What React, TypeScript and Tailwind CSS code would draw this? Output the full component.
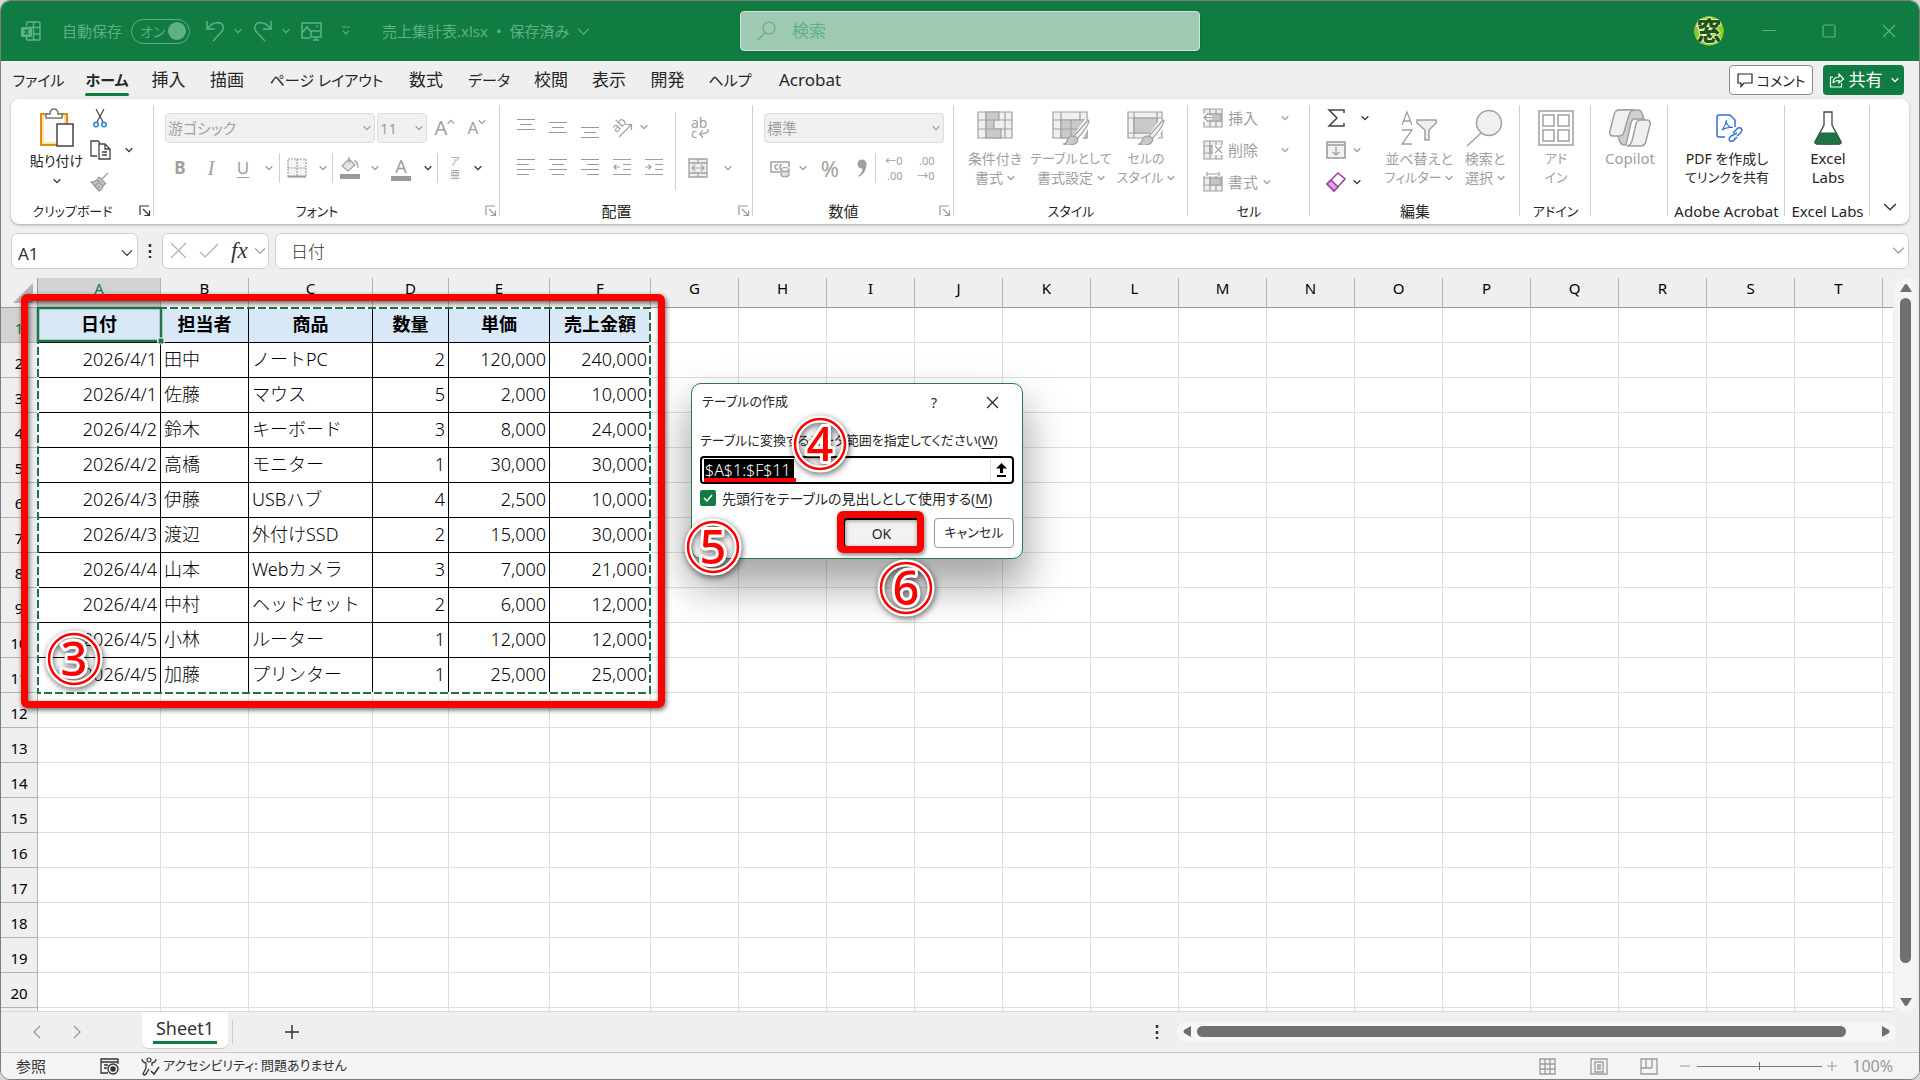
import type { ReactNode } from "react"
import clsx from "clsx"

const products: [string, string, string, string, string, string][] = [
  ["2026/4/1", "田中", "ノートPC", "2", "120,000", "240,000"],
  ["2026/4/1", "佐藤", "マウス", "5", "2,000", "10,000"],
  ["2026/4/2", "鈴木", "キーボード", "3", "8,000", "24,000"],
  ["2026/4/2", "高橋", "モニター", "1", "30,000", "30,000"],
  ["2026/4/3", "伊藤", "USBハブ", "4", "2,500", "10,000"],
  ["2026/4/3", "渡辺", "外付けSSD", "2", "15,000", "30,000"],
  ["2026/4/4", "山本", "Webカメラ", "3", "7,000", "21,000"],
  ["2026/4/4", "中村", "ヘッドセット", "2", "6,000", "12,000"],
  ["2026/4/5", "小林", "ルーター", "1", "12,000", "12,000"],
  ["2026/4/5", "加藤", "プリンター", "1", "25,000", "25,000"],
]
const headings = ["日付", "担当者", "商品", "数量", "単価", "売上金額"]
const sheet: string[][] = [headings, ...products]

const columns = "ABCDEFGHIJKLMNOPQRST".split("")
const columnWidths = ["w-[123px]", "w-[88px]", "w-[124px]", "w-[76px]", "w-[101px]", "w-[101px]"]

const menuTabs = [
  { label: "ファイル", width: "w-[71px]", kana: true },
  { label: "ホーム", width: "w-[66px]", kana: true },
  { label: "挿入", width: "w-[57px]" },
  { label: "描画", width: "w-[60px]" },
  { label: "ページ レイアウト", width: "w-[139px]", kana: true },
  { label: "数式", width: "w-[60px]" },
  { label: "データ", width: "w-[66px]", kana: true },
  { label: "校閲", width: "w-[58px]" },
  { label: "表示", width: "w-[58px]" },
  { label: "開発", width: "w-[59px]" },
  { label: "ヘルプ", width: "w-[66px]", kana: true },
  { label: "Acrobat", width: "w-[94px]" },
]

// Katakana labels are set smaller than kanji and Latin ones
function labelSize(text: string) {
  return /[ァ-ヶ]{2}/.test(text) ? "text-[13px]" : "text-[15px]"
}

function Chevron({ className = "text-[#9a9a9a]", size = 8 }: { className?: string; size?: number }) {
  return (
    <svg width={size} height={size} viewBox="0 0 8 8" fill="none" stroke="currentColor" strokeWidth={size > 10 ? 0.8 : 1.3} className={clsx("shrink-0", className)}>
      <path d="M.7 2.3 4 5.6 7.3 2.3" />
    </svg>
  )
}

function Icon({ w = 20, h = 20, children, className }: { w?: number; h?: number; children: ReactNode; className?: string }) {
  return (
    <svg width={w} height={h} viewBox={`0 0 ${w} ${h}`} fill="none" stroke="currentColor" strokeWidth="1.5" className={clsx("shrink-0", className)}>
      {children}
    </svg>
  )
}

// Ribbon button with a fixed-width cell
function Tool({ label, className, children }: { label: string; className: string; children: ReactNode }) {
  return (
    <button type="button" aria-label={label} className={clsx("flex shrink-0 items-center justify-center", className)}>
      {children}
    </button>
  )
}

function Divider() {
  return <span className="h-[30px] w-px shrink-0 bg-[#d0d0d0]" />
}

function Launcher({ dark = false }: { dark?: boolean }) {
  return (
    <Icon w={12} h={12} className={clsx("absolute right-[3px] bottom-[7px]", dark ? "text-[#333]" : "text-[#9a9a9a]")}>
      <path d="M1 10V1h9M4 4l6 6M10.500 5.500v5h-5" strokeWidth="1.200" />
    </Icon>
  )
}

function Group({ title, width, launcher, children }: { title: string; width: string; launcher?: "dark" | "light"; children: ReactNode }) {
  return (
    <section className={clsx("relative flex shrink-0 flex-col", width)}>
      <div className="flex h-[100px] items-start">{children}</div>
      <div className={clsx("flex h-6 justify-center leading-6 whitespace-nowrap text-[#262626]", labelSize(title), launcher && "pr-5")}>{title}</div>
      {launcher && <Launcher dark={launcher === "dark"} />}
      <span className="absolute top-1.5 right-0 bottom-2 w-px bg-[#d0d0d0]" />
    </section>
  )
}

function BigButton({ icon, lines, chevron, width, dark }: { icon: ReactNode; lines: string[]; chevron?: boolean; width: string; dark?: boolean }) {
  return (
    <button type="button" className={clsx("flex shrink-0 flex-col items-center pt-2", width, dark ? "text-[#262626]" : "text-[#a0a0a0]")}>
      <span className="flex h-[42px] items-center">{icon}</span>
      {lines.map((line, i) => (
        <span
          key={line}
          className={clsx(
            "flex h-[19px] items-center gap-1 leading-[19px] whitespace-nowrap",
            /^[A-Za-z]+$/.test(line) ? "text-[15px]" : /[ァ-ヶ]{2}/.test(line) ? "text-[13px]" : "text-[14px]"
          )}
        >
          {line}
          {chevron && i === lines.length - 1 && <Chevron />}
        </span>
      ))}
    </button>
  )
}

function AlignLines({ rows }: { rows: [number, number, number][] }) {
  return (
    <Icon w={20} h={26} className="text-[#999]">
      {rows.map(([x, w, y]) => (
        <path key={y} d={`M${x} ${y + 0.5}h${w}`} strokeWidth="1.200" />
      ))}
    </Icon>
  )
}

function TitleBar() {
  return (
    <header className="flex h-[60px] shrink-0 items-center bg-[#107c41] text-[#5db184]">
      <div className="flex w-[739px] shrink-0 items-center text-[15px]">
        <Icon className="ml-5">
          <path d="M5.500 5V2q0-1 1-1H18q1 0 1 1v16q0 1-1 1H6.500q-1 0-1-1v-2M12.500 1v18M5.500 6.500H19M12 13h7" />
          <rect x="0" y="6" width="11" height="10" rx="1.500" fill="currentColor" stroke="none" />
          <path d="m3.500 8.500 4 5m0-5-4 5" stroke="#107c41" />
        </Icon>
        <label htmlFor="autosave" className="ml-[21px] w-[69px] whitespace-nowrap">自動保存</label>
        <span className="relative flex h-[25px] w-[59px] items-center rounded-full border border-[#5db184] pl-2 text-[14px]">
          オン
          <input id="autosave" type="checkbox" defaultChecked className="absolute inset-0 appearance-none" />
          <span className="absolute right-[3px] size-[18px] rounded-full bg-[#5db184]" />
        </span>
        <Tool label="元に戻す" className="ml-3 w-[26px]">
          <Icon w={20} h={22}><path d="M2 1v8h8M2.500 8.500C6 4 10 2.500 13 2.500c7 1 6 7 3 10L8 21" strokeWidth="1.500" /></Icon>
        </Tool>
        <Tool label="元に戻すの履歴" className="w-5"><Chevron className="text-current" /></Tool>
        <Tool label="やり直し" className="w-[30px]">
          <Icon w={20} h={22}><path d="M18 1v8h-8M17.500 8.500C14 4 10 2.500 7 2.500c-7 1-6 7-3 10L12 21" strokeWidth="1.500" /></Icon>
        </Tool>
        <Tool label="やり直しの履歴" className="w-4"><Chevron className="text-current" /></Tool>
        <Tool label="画像" className="ml-1 w-[26px]">
          <Icon w={21}>
            <path d="M9 17H1V2h19v7M1 12l5-6 4 5M15 5h2" />
            <path d="M10 10h10v6H10zM15 16v3M12 19h6" />
          </Icon>
        </Tool>
        <Tool label="カスタマイズ" className="ml-3 w-5">
          <Icon w={10} h={10}><path d="M1 1h8M2 5l3 3 3-3" strokeWidth="1.200" /></Icon>
        </Tool>
        <button type="button" className="ml-[26px] flex items-center gap-2 whitespace-nowrap">
          <span>売上集計表.xlsx</span>
          <span>•</span>
          <span>保存済み</span>
          <Chevron className="text-current" size={13} />
        </button>
      </div>
      <div className="relative flex h-10 min-w-0 flex-1 items-center rounded border border-[#cfe5d9] bg-[#a0c9b4] pl-4 shadow">
        <Icon w={19} h={20}><circle cx="12" cy="7" r="6" strokeWidth="1.200" /><path d="M8 11.500 1 19" strokeWidth="1.200" /></Icon>
        <input aria-label="検索" placeholder="検索" className="ml-4 w-full bg-transparent text-[17px] outline-none placeholder:text-[#5db184]" />
      </div>
      <div className="flex w-[719px] shrink-0 items-center justify-end">
        <button type="button" aria-label="アカウント" className="mr-[15px] size-[30px] rounded-full">
          <svg width="30" height="30" viewBox="0 0 30 30" className="rounded-full">
            <circle cx="15" cy="15" r="15" fill="#8ccb1e" />
            <text x="15" y="24" textAnchor="middle" fontSize="25" fontWeight="900" fill="#1f5414" stroke="#e9f5d0" strokeWidth="2" paintOrder="stroke">窓</text>
          </svg>
        </button>
        <Tool label="最小化" className="w-[60px]"><Icon w={14} h={14}><path d="M0 6.500h14" strokeWidth="1" /></Icon></Tool>
        <Tool label="最大化" className="w-[60px]"><Icon w={14} h={14}><rect x="1" y="1" width="12" height="12" rx="2" strokeWidth="1.200" /></Icon></Tool>
        <Tool label="閉じる" className="w-[60px]"><Icon w={14} h={14}><path d="m1 1 12 12m0-12L1 13" strokeWidth="1.200" /></Icon></Tool>
      </div>
    </header>
  )
}

function MenuTabs() {
  return (
    <nav className="flex h-[38px] shrink-0 items-center pl-0.5 text-[#262626]">
      {menuTabs.map((tab) => (
        <button
          key={tab.label}
          type="button"
          className={clsx("relative h-full shrink-0 whitespace-nowrap", tab.width, tab.kana ? "text-[15px]" : "text-[17px]", tab.label === "ホーム" && "font-bold")}
        >
          {tab.label}
          {tab.label === "ホーム" && <span className="absolute inset-x-[11px] bottom-[3px] h-[3px] rounded-full bg-[#107c41]" />}
        </button>
      ))}
      <button type="button" className="ml-auto flex h-[30px] w-[84px] items-center justify-center gap-1 rounded border border-[#8a8a8a] bg-white text-[14px]">
        <Icon w={16} h={16}><path d="M1 2h14v9H7l-3 3.500V11H1z" strokeWidth="1.200" /></Icon>
        コメント
      </button>
      <button type="button" className="mr-[15px] ml-2.5 flex h-[30px] w-[81px] items-center justify-center gap-1 rounded bg-[#107c41] text-[17px] text-white">
        <Icon w={16} h={18}><path d="M4 6H1.500v10h11v-4M4 12c0-4 2-6 6-6V3l4.500 5L10 12V9.500c-3 0-4.500.5-6 2.500" strokeWidth="1.200" /></Icon>
        共有
        <Chevron className="ml-1 text-white" />
      </button>
    </nav>
  )
}

const gridPaths = "M1 1h34v26H1zM1 9h34M1 18h34M9 1v26M28 1v26"

function Brush() {
  return (
    <>
      <path d="M35 9 22 27l4 3q9-11 10-20" fill="#fff" stroke="#fff" strokeWidth="4" />
      <path d="M36 9 22 25l3 3Q36 16 37 10z" fill="#f0f0f0" strokeWidth="1.200" />
      <path d="M21 25q-5 0-6 5-1 3-4 3 8 3 13-1 3-3 1-5z" fill="#c9c9c9" strokeWidth="1.200" />
    </>
  )
}

function CellsIcon({ kind }: { kind: number }) {
  return (
    <Icon>
      <path d="M1 1h18v18H1zM1 6h18M1 13h18M7 1v18M13 1v18" fill="#eee" strokeWidth="1.200" />
      <path d="M7 6h11v7H7z" fill="#c4c4c4" strokeWidth="1.200" />
      {kind === 0 && <path d="M9 9.500H0M4 5.500l-4 4 4 4" stroke="#fff" strokeWidth="4" />}
      {kind === 0 && <path d="M9 9.500H1M5 5.500l-4 4 4 4" strokeWidth="1.200" />}
      {kind === 1 && <path d="M10 5h10v10H10z" fill="#fff" stroke="none" />}
      {kind === 1 && <path d="m12 6 7 7m0-7-7 7" strokeWidth="1.200" />}
      {kind === 2 && <path d="M0 0h20v4H0z" fill="#fff" stroke="none" />}
      {kind === 2 && <path d="M4 2h12M4 0v4M16 0v4" strokeWidth="1.200" />}
    </Icon>
  )
}

function Ribbon() {
  return (
    <div className="mx-[10px] flex h-[125px] shrink-0 rounded-lg bg-white text-[#a0a0a0] shadow-[0_1px_3px_rgba(0,0,0,0.3)]">
      <Group title="クリップボード" width="w-[143px]" launcher="dark">
        <button type="button" className="ml-3 flex w-[67px] shrink-0 flex-col items-center pt-2 text-[14px] text-[#262626]">
          <Icon w={36} h={42}>
            <path d="M2 7h26v31H2z" fill="#ffe2a8" stroke="#e08a1e" strokeWidth="2" />
            <path d="M5 10h20v25H5z" fill="#fafafa" stroke="none" />
            <path d="M7 11V7h4q0-5 4-5t4 5h4v4z" fill="#fff" stroke="#777" />
            <path d="M18 17h16v22H18z" fill="#fff" stroke="#444" />
          </Icon>
          <span className="leading-6 whitespace-nowrap">貼り付け</span>
          <Chevron className="mt-1 text-[#333]" />
        </button>
        <div className="flex flex-col pt-[3px] text-[#444]">
          <Tool label="切り取り" className="h-8 w-5">
            <Icon w={14} h={20}><path d="M3 1l7 13M11 1 4 14" strokeWidth="1.200" /><circle cx="3" cy="16.500" r="2.300" stroke="#1e8bcd" /><circle cx="11" cy="16.500" r="2.300" stroke="#1e8bcd" /></Icon>
          </Tool>
          <span className="flex">
            <Tool label="コピー" className="h-8 w-5">
              <Icon w={21}><path d="M7 16H1V1h7l2 2M9 4h6l5 5v10H9zM15 4v5h5M12 12h5M12 15h5" strokeWidth="1.300" /></Icon>
            </Tool>
            <Tool label="コピーのオプション" className="w-[38px]"><Chevron className="text-[#333]" /></Tool>
          </span>
          <Tool label="書式のコピー" className="h-8 w-5 text-[#999]">
            <Icon><path d="m18 1-6 6M9 5l6 6M9 5l-2 3 6 6 3-3M7 8q-2 2-6 2l8 9q4-2 4-5M5 14l3-3M7 17l3-3" fill="#c4c4c4" strokeWidth="1.200" /></Icon>
          </Tool>
        </div>
      </Group>

      <Group title="フォント" width="w-[346px]" launcher="light">
        <div className="flex flex-col pl-[11px]">
          <div className="flex items-center pt-3.5">
            <span className="relative">
              <select aria-label="フォント名" className="h-[30px] w-[210px] appearance-none rounded border border-[#dcdcdc] bg-[#f0f0f0] px-0.5 text-[15px]">
                <option>游ゴシック</option>
              </select>
              <Chevron className="absolute top-[11px] right-1" />
            </span>
            <span className="relative ml-0.5">
              <select aria-label="フォント サイズ" className="h-[30px] w-[50px] appearance-none rounded border border-[#dcdcdc] bg-[#f0f0f0] px-0.5 text-[15px]">
                <option>11</option>
              </select>
              <Chevron className="absolute top-[11px] right-1" />
            </span>
            <Tool label="フォント サイズの拡大" className="ml-0.5 w-8"><span className="text-[20px] leading-6">A</span><Chevron className="mb-3 rotate-180" /></Tool>
            <Tool label="フォント サイズの縮小" className="w-8"><span className="text-[17px] leading-6">A</span><Chevron className="mb-3" /></Tool>
          </div>
          <div className="flex h-[50px] items-center">
            <Tool label="太字" className="w-[30px] text-[17px] font-bold">B</Tool>
            <Tool label="斜体" className="w-8 font-['Liberation_Serif'] text-[20px] italic">I</Tool>
            <Tool label="下線" className="w-8 text-[17px] underline underline-offset-3">U</Tool>
            <Tool label="下線の種類" className="w-5"><Chevron /></Tool>
            <Divider />
            <Tool label="罫線" className="w-[34px]">
              <Icon><path d="M1 1h18v18H1zM10 1v18M1 10h18" fill="#f4f4f4" strokeDasharray="2 1" strokeWidth="1.200" /><path d="M1 18.500h18" strokeWidth="2" /></Icon>
            </Tool>
            <Tool label="罫線の種類" className="w-[18px]"><Chevron /></Tool>
            <Divider />
            <Tool label="塗りつぶしの色" className="w-[34px]">
              <Icon w={22} h={24}><path d="M10 1v6M10 3l6 6-7 6-6-5zM15 5q4-1 4 7" fill="#e4e4e4" strokeWidth="1.200" /><path d="M1 20.500h20" strokeWidth="5" stroke="#999" /></Icon>
            </Tool>
            <Tool label="塗りつぶしの一覧" className="w-4"><Chevron /></Tool>
            <Tool label="フォントの色" className="w-[36px]">
              <span className="flex flex-col items-center"><span className="text-[18px] leading-5">A</span><span className="h-[5px] w-5 bg-[#999]" /></span>
            </Tool>
            <Tool label="フォントの色の一覧" className="w-[18px]"><Chevron className="text-[#333]" /></Tool>
            <Divider />
            <Tool label="ふりがな" className="w-[34px]"><span className="flex flex-col text-[10px] leading-[13px]"><span>ア</span><span>亜</span></span></Tool>
            <Tool label="ふりがなの設定" className="w-3"><Chevron className="text-[#333]" /></Tool>
          </div>
        </div>
      </Group>

      <Group title="配置" width="w-[253px]" launcher="light">
        <div className="flex w-[175px] shrink-0 flex-col pl-[10px]">
          <div className="flex h-[46px] items-end">
            <Tool label="上揃え" className="w-8"><AlignLines rows={[[1, 18, 0], [4, 12, 5], [1, 18, 10]]} /></Tool>
            <Tool label="上下中央揃え" className="w-8"><AlignLines rows={[[1, 18, 3], [4, 12, 8], [1, 18, 13]]} /></Tool>
            <Tool label="下揃え" className="w-8"><AlignLines rows={[[1, 18, 8], [4, 12, 13], [1, 18, 18]]} /></Tool>
            <Tool label="方向" className="w-8">
              <Icon w={22} h={28}>
                <path d="m8 20 12-12M15 7.500h5.500V13" strokeWidth="1.200" />
                <text x="8" y="12" textAnchor="middle" transform="rotate(-45 8 8)" fill="currentColor" stroke="none" fontSize="13">ab</text>
              </Icon>
            </Tool>
            <Tool label="方向の一覧" className="mb-3.5 w-3"><Chevron /></Tool>
          </div>
          <div className="flex h-[46px] items-center">
            <Tool label="左揃え" className="w-8"><AlignLines rows={[[1, 18, 4], [1, 12, 9], [1, 18, 14], [1, 12, 19]]} /></Tool>
            <Tool label="中央揃え" className="w-8"><AlignLines rows={[[1, 18, 4], [4, 12, 9], [1, 18, 14], [4, 12, 19]]} /></Tool>
            <Tool label="右揃え" className="w-8"><AlignLines rows={[[1, 18, 4], [7, 12, 9], [1, 18, 14], [7, 12, 19]]} /></Tool>
            <Tool label="インデントを減らす" className="w-8"><Icon h={26}><path d="M1 4.500h18M11 9.500h8M11 14.500h8M1 19.500h18M8 12H2M4.500 9.500 2 12 4.500 14.500" strokeWidth="1.200" /></Icon></Tool>
            <Tool label="インデントを増やす" className="w-8"><Icon h={26}><path d="M1 4.500h18M11 9.500h8M11 14.500h8M1 19.500h18M1 12h6M4.500 9.500 7 12 4.500 14.500" strokeWidth="1.200" /></Icon></Tool>
          </div>
        </div>
        <span className="mt-[13px] h-[78px] w-px bg-[#d0d0d0]" />
        <div className="flex flex-col pl-2">
          <Tool label="折り返して全体を表示する" className="h-[52px] w-8 pt-2">
            <Icon w={20} h={26}>
              <text x="1" y="12" fill="currentColor" stroke="none" fontSize="14">ab</text>
              <text x="1" y="22" fill="currentColor" stroke="none" fontSize="13">c</text>
              <path d="M18 13q1 5-8 5M13 14.500 9.500 18l3.500 3.500" strokeWidth="1.200" />
            </Icon>
          </Tool>
          <span className="flex h-[34px] items-center">
            <Tool label="セルを結合して中央揃え" className="w-[28px]">
              <Icon><path d="M1 1h18v18H1zM1 5h18M1 15h18M10 1v4M10 15v4" fill="#f0f0f0" strokeWidth="1.300" /><path d="M4 10h12M7 7l-3 3 3 3M13 7l3 3-3 3" strokeWidth="1.200" /></Icon>
            </Tool>
            <Tool label="結合の一覧" className="w-[32px]"><Chevron /></Tool>
          </span>
        </div>
      </Group>

      <Group title="数値" width="w-[201px]" launcher="light">
        <div className="flex flex-col pl-[11px]">
          <span className="relative mt-3.5">
            <select aria-label="表示形式" className="h-[30px] w-[180px] appearance-none rounded border border-[#dcdcdc] bg-[#f0f0f0] px-0.5 text-[15px]">
              <option>標準</option>
            </select>
            <Chevron className="absolute top-[11px] right-1" />
          </span>
          <div className="flex h-[50px] items-center">
            <Tool label="通貨表示形式" className="w-[31px]">
              <Icon><path d="M10 14H1V4h18v5M8 7q-3-1-3 2t3 2M12 7q-2-1-2 2v2" /><path d="M11 11.500v6q4 3 8 0v-6" fill="#ddd" strokeWidth="1.200" /><ellipse cx="15" cy="11.500" rx="4" ry="2" fill="#eee" strokeWidth="1.200" /></Icon>
            </Tool>
            <Tool label="通貨の一覧" className="w-4"><Chevron /></Tool>
            <Tool label="パーセント" className="w-[38px] text-[22px]">%</Tool>
            <Tool label="桁区切り" className="w-[26px]"><svg width="12" height="18" viewBox="0 0 12 18" fill="currentColor"><circle cx="6" cy="5" r="4.500" /><path d="M10.500 5q0 9-8 13v-1.500q4-3 4-7.500z" /></svg></Tool>
            <Divider />
            <Tool label="小数点以下の表示桁数を増やす" className="w-9"><span className="flex flex-col text-[11px] leading-[15px]"><span>←0</span><span className="text-right">.00</span></span></Tool>
            <Tool label="小数点以下の表示桁数を減らす" className="w-[28px]"><span className="flex flex-col text-[11px] leading-[15px]"><span className="text-right">.00</span><span>→0</span></span></Tool>
          </div>
        </div>
      </Group>

      <Group title="スタイル" width="w-[234px]">
        <BigButton width="w-[82px]" lines={["条件付き", "書式"]} chevron icon={<Icon w={36} h={34}><path d={gridPaths} fill="#f0f0f0" strokeWidth="1.200" /><path d="M9 1h13v8H9zM9 9h8v9H9zM9 18h15v9H9z" fill="#c9c9c9" strokeWidth="1.200" /></Icon>} />
        <BigButton width="w-[70px]" lines={["テーブルとして", "書式設定"]} chevron icon={<Icon w={38} h={34}><path d={gridPaths} fill="#f0f0f0" strokeWidth="1.200" /><path d="M9 9h26v18H9z" fill="#c9c9c9" strokeWidth="1.200" /><path d="M9 18h26M19 9v18" strokeWidth="1.200" /><Brush /></Icon>} />
        <BigButton width="w-[80px]" lines={["セルの", "スタイル"]} chevron icon={<Icon w={38} h={34}><path d="M1 1h34v26H1zM1 7h34M7 1v26M30 1v26M1 22h34" fill="#f0f0f0" strokeWidth="1.200" /><path d="M7 7h23v15H7z" fill="#c9c9c9" strokeWidth="1.200" /><Brush /></Icon>} />
      </Group>

      <Group title="セル" width="w-[122px]">
        <div className="flex flex-col pt-[3px] pl-[15px] text-[15px]">
          {["挿入", "削除", "書式"].map((label, i) => (
            <button key={label} type="button" className="flex h-8 items-center gap-[5px]">
              <CellsIcon kind={i} />
              {label}
              <Chevron className={i < 2 ? "ml-[18px]" : ""} />
            </button>
          ))}
        </div>
      </Group>

      <Group title="編集" width="w-[210px]">
        <div className="flex w-[70px] shrink-0 flex-col pt-[3px] pl-4 text-[#444]">
          <button type="button" aria-label="合計" className="flex h-8 items-center gap-[15px]"><Icon><path d="M18 5V2H3l8 8-8 8h15v-3" /></Icon><Chevron className="text-[#333]" /></button>
          <button type="button" aria-label="フィル" className="flex h-8 items-center gap-[7px] text-[#999]"><Icon><path d="M1 2h18v16H1zM1 5h18" fill="#f0f0f0" /><path d="M10 7v8M6.500 12l3.500 3 3.500-3" strokeWidth="1.200" /></Icon><Chevron /></button>
          <button type="button" aria-label="クリア" className="flex h-8 items-center gap-[7px] text-[#a33aa8]"><Icon><path d="M1 12 12 1l7 6L8 19z" fill="#fff" /><path d="m1 12 4-4 7 7-4 4z" fill="#d9a3dd" /></Icon><Chevron className="text-[#333]" /></button>
        </div>
        <BigButton
          width="w-[78px]"
          lines={["並べ替えと", "フィルター"]}
          chevron
          icon={<Icon w={36} h={36}><path d="m1 15 5-13 5 13M3 11h6M1 20h10L1 34h10" strokeWidth="1.300" /><path d="M16 10h19v3l-7 7v10h-4V20l-8-7z" fill="#f0f0f0" /></Icon>}
        />
        <BigButton width="w-[54px]" lines={["検索と", "選択"]} chevron icon={<Icon w={38} h={38}><circle cx="23" cy="14" r="12.500" fill="#f0f0f0" /><path d="M15 24 1 37" /></Icon>} />
      </Group>

      <Group title="アドイン" width="w-[71px]">
        <BigButton width="w-[72px]" lines={["アド", "イン"]} icon={<Icon w={36} h={36}><path d="M1 1h34v34H1zM5 5h11v11H5zM20 5h11v11H20zM5 20h11v11H5zM20 20h11v11H20z" /></Icon>} />
      </Group>
      <Group title="" width="w-[77px]">
        <BigButton
          width="w-[78px]"
          lines={["Copilot"]}
          icon={
            <Icon w={42} h={38}>
              <path d="M10 1h19q3 0 4 3l2 6h-9q-3 0-4 4l-5 22h-1q-4 0-5-3l-2-6z" fill="#cfcfcf" />
              <path d="M10 1h15q-4 1-5 5l-5 17q-1 4-5 4H4q-4 0-3-5L5 6q1-5 5-5zM32 37H18q4-1 5-5l4-17q1-4 5-4h6q4 0 3 5l-4 16q-1 5-5 5z" fill="#f0f0f0" />
            </Icon>
          }
        />
      </Group>
      <Group title="Adobe Acrobat" width="w-[117px]">
        <BigButton
          dark
          width="w-[118px]"
          lines={["PDF を作成し", "てリンクを共有"]}
          icon={
            <Icon w={28} h={30} className="ml-1 text-[#2f6fe0]">
              <path d="M10 24H4q-2 0-2-2V4q0-2 2-2h11l5 5v7" />
              <path d="M7 17q4-5 4.500-10M11 8q1 6 7 6.500M7 17q5-3.500 10-2.500" strokeWidth="1.200" />
              <path d="m18 20 5-5q3-1 4 2 0 2-5 6M22 20l-6 3q-3 3-1 5 3 1 5-2l2-2" />
            </Icon>
          }
        />
      </Group>
      <Group title="Excel Labs" width="w-[85px]">
        <BigButton
          dark
          width="w-[86px]"
          lines={["Excel", "Labs"]}
          icon={<Icon w={30} h={36} className="text-[#444]"><path d="M11 2h8v13l9 17q0 2-3 2H5q-3 0-3-2l9-17z" fill="#fff" strokeWidth="1.300" /><path d="M7 23h16l5 9q0 2-3 2H5q-3 0-3-2z" fill="#217346" stroke="#1b6b3e" strokeWidth="1.200" /></Icon>}
        />
      </Group>
      <button type="button" aria-label="リボンを折りたたむ" className="ml-auto flex items-end px-3 pb-2.5"><Chevron size={14} className="text-[#333]" /></button>
    </div>
  )
}

function FormulaBar() {
  return (
    <div className="mx-[10px] flex h-[54px] shrink-0 items-center pb-px text-[#333]">
      <div className="relative h-9 w-[127px]">
        <input aria-label="名前ボックス" defaultValue="A1" className="h-full w-full rounded-md border border-[#d0d0d0] bg-white px-1.5 pt-1.5 text-[17px]" />
        <Chevron size={12} className="absolute top-[14px] right-[5px] text-[#333]" />
      </div>
      <Icon w={4} h={16} className="mx-[10px]"><path d="M2 1v14" strokeWidth="2.500" strokeDasharray="3 3" /></Icon>
      <div className="flex h-9 w-[107px] items-center justify-between rounded-md border border-[#d0d0d0] bg-white pr-0.5 pl-[5px] text-[#b0b0b0]">
        <Tool label="キャンセル" className="w-5"><Icon w={17} h={17}><path d="m1 1 15 15m0-15L1 16" strokeWidth="1.200" /></Icon></Tool>
        <Tool label="入力" className="ml-1.5 w-6"><Icon w={20} h={16}><path d="m1 9 5 5L19 1" strokeWidth="1.200" /></Icon></Tool>
        <Tool label="関数の挿入" className="w-7 pl-1 font-['Liberation_Serif'] text-[23px] leading-6 text-[#333] italic">fx</Tool>
        <Chevron size={12} />
      </div>
      <div className="relative ml-[6px] h-9 flex-1">
        <input aria-label="数式バー" defaultValue="日付" className="h-full w-full rounded-md border border-[#d0d0d0] bg-white px-[15px] text-[17px] font-light" />
        <Chevron size={13} className="absolute top-[11px] right-1 text-[#9a9a9a]" />
      </div>
    </div>
  )
}

function Worksheet() {
  return (
    <main className="relative flex min-h-0 flex-1">
      <div className="min-w-0 flex-1 overflow-hidden border-b border-[#d8d8d8] bg-white">
        <table className="w-full table-fixed border-separate border-spacing-0 text-[18px] text-black [font-feature-settings:normal]">
          <thead>
            <tr className="h-[30px] bg-[#efefef] text-[15px]">
              <th className="relative w-[37px] border-r border-b border-[#9a9a9a]">
                <svg className="absolute right-1 bottom-1" width="20" height="20" viewBox="0 0 20 20"><path d="M20 0v20H0z" fill="#b4b4b4" /></svg>
              </th>
              {columns.map((name, i) => (
                <th
                  key={name}
                  className={clsx(
                    "border-r border-b border-r-[#b4b4b4] border-b-[#9a9a9a] pb-[9px] leading-5 font-normal",
                    columnWidths[i] ?? "w-[88px]",
                    i === 0 && "bg-[#d2d2d2] text-[#107c41]"
                  )}
                >
                  {name}
                </th>
              ))}
              <th className="border-b border-[#9a9a9a]" />
            </tr>
          </thead>
          <tbody>
            {Array.from({ length: 21 }, (_, r) => (
              <tr key={r} className="h-[35px]">
                <th className={clsx("border-r border-b border-[#b4b4b4] pt-1.5 text-[15px] leading-5 font-normal", r === 0 ? "bg-[#d2d2d2] text-[#107c41]" : "bg-[#efefef]")}>{r < 20 ? r + 1 : null}</th>
                {columns.map((name, c) => {
                  const filled = r < 11 && c < 6
                  return (
                    <td
                      key={name}
                      className={clsx(
                        "border-r border-b pb-0.5 leading-7 whitespace-nowrap",
                        filled ? "border-black" : "border-[#dedede]",
                        filled && r === 0 && "bg-[#d9e8f7] text-center font-bold",
                        filled && r > 0 && "font-light",
                        filled && r > 0 && (c === 1 || c === 2 ? "pl-[3px] text-left" : "pr-[3px] text-right")
                      )}
                    >
                      {filled ? sheet[r][c] : null}
                    </td>
                  )
                })}
                <td className="border-b border-[#dedede]" />
              </tr>
            ))}
          </tbody>
        </table>
      </div>
      {/* moving border of the copied range, then the active cell */}
      <svg className="absolute top-[28px] left-[35px]" width="618" height="390" fill="none" stroke="#217346" strokeWidth="2">
        <rect x="2" y="2" width="612" height="385" stroke="#fff" />
        <rect x="2" y="2" width="612" height="385" strokeDasharray="8 3" />
        <path d="M2 2h123v31M2 2v33h119" strokeWidth="2.500" />
        <path d="M122 32h6v6h-6z" fill="#217346" stroke="#fff" strokeWidth="1" />
      </svg>
      <div className="mr-[3px] ml-0.5 flex w-[21px] shrink-0 flex-col items-center rounded-full bg-[#f5f5f5] py-[5px]">
        <svg width="12" height="10" viewBox="0 0 12 10" fill="#6e6e6e"><path d="M6 1q1 0 1.500 1L12 9H0l4.500-7Q5 1 6 1z" /></svg>
        <div className="mt-[5px] mb-[34px] w-[11px] flex-1 rounded-full bg-[#707070]" />
        <svg width="12" height="10" viewBox="0 0 12 10" fill="#6e6e6e"><path d="M6 9q-1 0-1.500-1L0 1h12L7.500 8Q7 9 6 9z" /></svg>
      </div>
    </main>
  )
}

function SheetTabs() {
  return (
    <div className="flex h-10 shrink-0 items-center pb-px text-[#333]">
      <Tool label="前のシート" className="ml-4 w-10 text-[#999]"><Icon w={10} h={14}><path d="M8 1 2 7l6 6" strokeWidth="1.300" /></Icon></Tool>
      <Tool label="次のシート" className="w-10 text-[#999]"><Icon w={10} h={14}><path d="m2 1 6 6-6 6" strokeWidth="1.300" /></Icon></Tool>
      <button type="button" className="mb-1 ml-[45px] flex h-9 w-[86px] items-center justify-center rounded-b-md bg-white text-[18px] shadow-[0_1px_1px_rgba(0,0,0,0.15)]">
        <span className="border-b-3 border-[#107c41] px-[3px] leading-[26px]">Sheet1</span>
      </button>
      <span className="ml-1 h-6 w-px bg-[#ccc]" />
      <Tool label="新しいシート" className="ml-[49px] w-5"><Icon w={16} h={16}><path d="M8 1v14M1 8h14" /></Icon></Tool>
      <Icon w={4} h={16} className="ml-auto"><path d="M2 1v14" strokeWidth="2.500" strokeDasharray="3 3" /></Icon>
      <div className="mr-[23px] ml-[18px] flex h-5 w-[37.5%] items-center rounded-full bg-[#f6f6f6] px-[6px]">
        <svg width="9" height="11" viewBox="0 0 9 11" fill="#6e6e6e"><path d="M8 0v11L1 7Q0 5.500 1 4z" /></svg>
        <div className="mr-[35px] ml-[5px] h-[11px] flex-1 rounded-full bg-[#707070]" />
        <svg width="9" height="11" viewBox="0 0 9 11" fill="#6e6e6e"><path d="M1 0v11l7-4q1-1.500 0-3z" /></svg>
      </div>
    </div>
  )
}

function StatusBar() {
  return (
    <footer className="flex h-[27px] shrink-0 items-center border-t border-[#c8c8c8] bg-[#f4f4f4] text-[13px] text-[#333]">
      <span className="ml-[15px] w-[84px] text-[15px]">参照</span>
      <Tool label="マクロの記録" className="w-5">
        <Icon h={18}><path d="M8 16H1V2h17v5M1 5h17M4 8h4M4 11h3" strokeWidth="1.300" /><circle cx="13" cy="12" r="5" strokeWidth="1.300" /><circle cx="13" cy="12" r="2" fill="currentColor" /></Icon>
      </Tool>
      <button type="button" className="ml-[21px] flex items-center gap-[3px] whitespace-nowrap">
        <Icon w={19} h={19}><circle cx="8" cy="3" r="2" strokeWidth="1.200" /><path d="M1 2q0 3 4 4v5l-3 6q1 2 3 0l3-5M15 2q0 3-4 4v3" strokeWidth="1.300" /><path d="m10 14 3 3 5-7" /></Icon>
        アクセシビリティ: 問題ありません
      </button>
      <div className="ml-auto flex items-center text-[#9a9a9a]">
        <Tool label="標準" className="w-[51px]"><Icon w={17} h={17}><path d="M1 1h15v15H1zM1 6h15M1 11h15M6 1v15M11 1v15" strokeWidth="1.300" /></Icon></Tool>
        <Tool label="ページ レイアウト" className="w-[51px]"><Icon w={18} h={17}><path d="M1 1h16v15H1zM5 4h8v10H5zM7 7h4M7 9h4M7 11h4" strokeWidth="1.300" /></Icon></Tool>
        <Tool label="改ページ プレビュー" className="w-[49px]"><Icon w={18} h={17}><path d="M1 1h16v15H1zM1 10h11M6 1v9M12 1v9" strokeWidth="1.300" /></Icon></Tool>
        <Tool label="縮小" className="w-6"><Icon w={10} h={10}><path d="M0 5h10" strokeWidth="1" /></Icon></Tool>
        <input
          type="range"
          aria-label="ズーム"
          defaultValue={50}
          className="h-3 w-[125px] appearance-none bg-[linear-gradient(#777,#777)] bg-[length:100%_1px] bg-center bg-no-repeat [&::-webkit-slider-thumb]:h-2 [&::-webkit-slider-thumb]:w-px [&::-webkit-slider-thumb]:appearance-none [&::-webkit-slider-thumb]:bg-[#666]"
        />
        <Tool label="拡大" className="w-5"><Icon w={10} h={10}><path d="M0 5h10M5 0v10" strokeWidth="1" /></Icon></Tool>
        <span className="mr-[26px] ml-2 w-[43px] text-right text-[16px]">100%</span>
      </div>
    </footer>
  )
}

function CreateTableDialog() {
  return (
    <div role="dialog" aria-labelledby="dialog-title" className="absolute top-[382px] left-[690px] h-[176px] w-[332px] rounded-[10px] border border-[#217d4a] bg-white px-2 text-[14px] text-[#262626] shadow-[0_24px_40px_4px_rgba(0,0,0,0.35)]">
      <div className="flex h-9 items-center pl-0.5">
        <h2 id="dialog-title" className="flex-1 text-[13px]">テーブルの作成</h2>
        <button type="button" className="w-10">?</button>
        <Tool label="閉じる" className="mr-0.5 ml-[18px] w-10"><Icon w={13} h={13}><path d="m1 1 11 11m0-11L1 12" strokeWidth="1.200" /></Icon></Tool>
      </div>
      <label htmlFor="range" className="flex h-9 items-center pt-1.5 text-[13px] whitespace-nowrap">
        テーブルに変換するデータ範囲を指定してください(<u className="underline-offset-3">W</u>)
      </label>
      <div className="relative flex h-[28px] items-center rounded border-2 border-black pl-0.5">
        <input id="range" defaultValue="$A$1:$F$11" className="h-[22px] w-[90px] bg-black pl-px text-[16px] font-light text-white outline-none" />
        <span className="absolute bottom-0 left-0.5 h-1 w-[92px] bg-[#f00]" />
        <Tool label="範囲の選択" className="ml-auto h-full w-[22px] border-l border-[#ddd]">
          <svg width="11" height="14" viewBox="0 0 11 14"><path d="M5.500 0 11 5.500H7V10H4V5.500H0zM1 12h9v2H1z" /></svg>
        </Tool>
      </div>
      <label className="mt-[5px] flex h-[18px] items-center gap-[6px] whitespace-nowrap">
        <span className="relative flex size-4 items-center justify-center rounded-[2px] bg-[#107c41]">
          <input type="checkbox" defaultChecked className="absolute inset-0 appearance-none" />
          <Icon w={10} h={8} className="text-white"><path d="m1 4 3 3 5-6" /></Icon>
        </span>
        <span>先頭行をテーブルの見出しとして使用する(<u className="underline-offset-3">M</u>)</span>
      </label>
      <div className="mt-[11px] flex justify-end gap-[14px]">
        <button type="button" className="h-[30px] w-[77px] rounded border-2 border-black bg-[#f2f2f2]">OK</button>
        <button type="button" className="h-[30px] w-[80px] rounded border border-[#999] text-[13px] whitespace-nowrap">キャンセル</button>
      </div>
    </div>
  )
}

// Numbered step marker laid over the window
function Step({ n, className }: { n: string; className: string }) {
  return (
    <svg width="60" height="60" viewBox="0 0 60 60" className={clsx("absolute drop-shadow-[1px_2px_3px_rgba(0,0,0,0.6)]", className)}>
      <circle cx="30" cy="30" r="25" fill="none" stroke="#fff" strokeWidth="7" />
      <circle cx="30" cy="30" r="25" fill="none" stroke="#f00" strokeWidth="2.500" />
      <text x="30" y="47" textAnchor="middle" fontSize="47" fontWeight="500" fill="#f00" stroke="#fff" strokeWidth="6" paintOrder="stroke" strokeLinejoin="round">
        {n}
      </text>
    </svg>
  )
}

export default function App() {
  return (
    <div lang="ja" className="h-screen bg-[#d8d8d8] font-['Noto_Sans','Noto_Sans_CJK_JP',sans-serif] [font-feature-settings:'palt']">
      <div className="relative flex h-full flex-col overflow-hidden rounded-[10px] border border-[#7d7d7d] bg-[#efefef]">
        <TitleBar />
        <MenuTabs />
        <Ribbon />
        <FormulaBar />
        <Worksheet />
        <SheetTabs />
        <StatusBar />

        <CreateTableDialog />
        <div className="absolute top-[293px] left-[20px] h-[414px] w-[644px] rounded-md border-7 border-[#f00] shadow-[1px_2px_5px_rgba(0,0,0,0.6),inset_1px_2px_5px_rgba(0,0,0,0.6)]" />
        <div className="absolute top-[510px] left-[836px] h-[42px] w-[87px] rounded-md border-7 border-[#f00] shadow-[1px_2px_4px_rgba(0,0,0,0.5),inset_1px_2px_5px_rgba(0,0,0,0.5)]" />
        <Step n="3" className="top-[628px] left-[43px]" />
        <Step n="4" className="top-[413px] left-[789px]" />
        <Step n="5" className="top-[516px] left-[682px]" />
        <Step n="6" className="top-[557px] left-[875px]" />
      </div>
    </div>
  )
}
